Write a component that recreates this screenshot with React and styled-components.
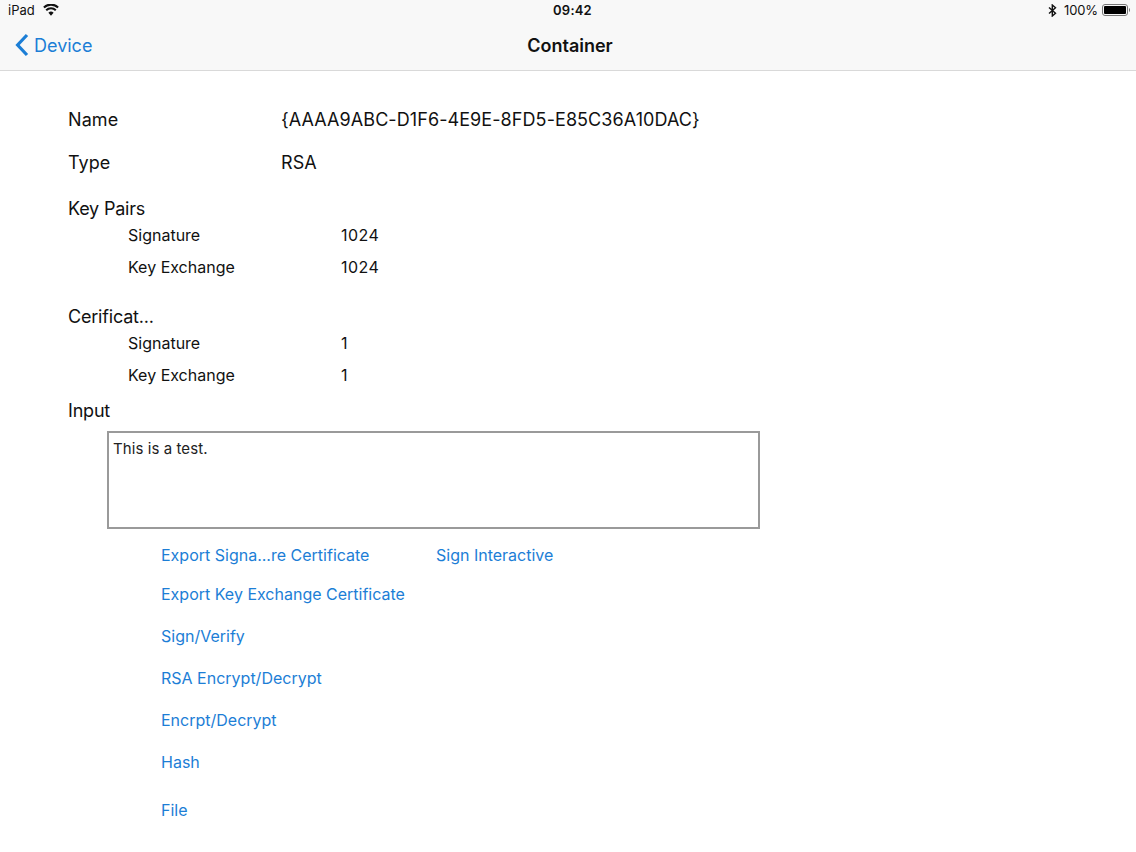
import React from 'react'
import styled, { createGlobalStyle } from 'styled-components'

const GlobalStyle = createGlobalStyle`
  html, body {
    margin: 0;
    padding: 0;
    background: #fff;
    font-family: Inter, 'Liberation Sans', sans-serif;
    color: #111;
  }
`

const Page = styled.div`
  width: 1136px;
  height: 852px;
  overflow: hidden;
  background: #fff;
`

const TopBar = styled.header`
  height: 71px;
  background: #f8f8f8;
  border-bottom: 1px solid #d9d9d9;
  box-sizing: border-box;
`

const StatusBar = styled.div`
  height: 20px;
  display: grid;
  grid-template-columns: 1fr auto 1fr;
  align-items: center;
  padding: 0 5px 0 8px;
  font-size: 13px;
  color: #111;
`

const StatusLeft = styled.div`
  display: flex;
  align-items: center;
  gap: 8px;
`

const StatusRight = styled.div`
  display: flex;
  align-items: center;
  justify-content: flex-end;
  gap: 4px;
  letter-spacing: -0.1px;
`

const BluetoothSlot = styled.span`
  display: flex;
  margin-right: 3px;
`

const Clock = styled.div`
  margin-left: 6px;
  font-weight: 600;
  letter-spacing: 0.2px;
`

const NavBar = styled.nav`
  height: 50px;
  display: grid;
  grid-template-columns: 1fr auto 1fr;
  align-items: center;
  padding: 0 15px;
`

const BackLink = styled.div`
  display: flex;
  align-items: center;
  gap: 5px;
  font-size: 18px;
  color: #1c7ed6;
`

const NavTitle = styled.h1`
  margin: 0 0 0 4px;
  font-size: 18px;
  font-weight: 600;
  color: #111;
`

const Content = styled.main`
  padding: 26px 0 0 68px;
`

const InfoRow = styled.div`
  display: flex;
  align-items: center;
  height: ${(p) => p.$h}px;
  font-size: 18px;
  letter-spacing: 0.08px;
`

const InfoLabel = styled.div`
  width: 213px;
  flex-shrink: 0;
`

const Heading = styled.div`
  height: 22px;
  line-height: 24px;
  margin-top: ${(p) => p.$top}px;
  font-size: 18px;
  letter-spacing: -0.2px;
`

const SubRow = styled.div`
  display: flex;
  align-items: center;
  height: 32px;
  padding-left: 60px;
  font-size: 16px;
`

const Count = styled.span`
  letter-spacing: 0.5px;
`

const TextBox = styled.div`
  box-sizing: border-box;
  width: 653px;
  height: 98px;
  margin: 10px 0 0 39px;
  padding: 6px 4px;
  border: 2px solid #9a9a9a;
  font-size: 15px;
  line-height: 20px;
  letter-spacing: 0.08px;
  color: #222;
`

const Actions = styled.div`
  margin-left: 93px;
  padding-top: 6px;
`

const ActionRow = styled.div`
  display: flex;
  align-items: center;
  height: ${(p) => p.$h}px;
  margin-top: ${(p) => p.$top || 0}px;
`

const ActionLink = styled.button`
  border: none;
  background: none;
  padding: 0;
  font: inherit;
  font-size: 16px;
  color: #1c7ed6;
  width: ${(p) => (p.$w ? `${p.$w}px` : 'auto')};
  text-align: left;
`

function WifiIcon() {
  return (
    <svg width="16" height="12" viewBox="0 0 16 12">
      <path d="M8 11.8 5.4 8.7a3.8 3.8 0 0 1 5.2 0Z" fill="#111" />
      <path d="M3.2 6.2a7 7 0 0 1 9.6 0" fill="none" stroke="#111" strokeWidth="2.1" />
      <path d="M.9 3.4a10.4 10.4 0 0 1 14.2 0" fill="none" stroke="#111" strokeWidth="2.1" />
    </svg>
  )
}

function BluetoothIcon() {
  return (
    <svg width="9" height="13" viewBox="0 0 9 13">
      <path d="M1 3.5 7.5 9.2 4.3 12V1l3.2 2.8L1 9.5" fill="none" stroke="#111" strokeWidth="1.4" />
    </svg>
  )
}

function BatteryIcon() {
  return (
    <svg width="29" height="12" viewBox="0 0 29 12">
      <rect x="0.5" y="0.5" width="25" height="11" rx="2.5" fill="none" stroke="#777" />
      <rect x="2" y="2" width="22" height="8" rx="1" fill="#000" />
      <path d="M27 4v4a2 2 0 0 0 1-2 2 2 0 0 0-1-2Z" fill="#777" />
    </svg>
  )
}

function BackChevron() {
  return (
    <svg width="14" height="24" viewBox="0 0 14 24">
      <path d="M12 2 2.6 12 12 22" fill="none" stroke="#1c7ed6" strokeWidth="3.2" />
    </svg>
  )
}

function KeyGroup({ title, top, signature, exchange }) {
  return (
    <>
      <Heading $top={top}>{title}</Heading>
      <SubRow>
        <InfoLabel>Signature</InfoLabel>
        <Count>{signature}</Count>
      </SubRow>
      <SubRow>
        <InfoLabel>Key Exchange</InfoLabel>
        <Count>{exchange}</Count>
      </SubRow>
    </>
  )
}

export default function App() {
  return (
    <Page>
      <GlobalStyle />
      <TopBar>
        <StatusBar>
          <StatusLeft>
            iPad
            <WifiIcon />
          </StatusLeft>
          <Clock>09:42</Clock>
          <StatusRight>
            <BluetoothSlot>
              <BluetoothIcon />
            </BluetoothSlot>
            100%
            <BatteryIcon />
          </StatusRight>
        </StatusBar>
        <NavBar>
          <BackLink>
            <BackChevron />
            Device
          </BackLink>
          <NavTitle>Container</NavTitle>
        </NavBar>
      </TopBar>
      <Content>
        <InfoRow $h={44}>
          <InfoLabel>Name</InfoLabel>
          {'{AAAA9ABC-D1F6-4E9E-8FD5-E85C36A10DAC}'}
        </InfoRow>
        <InfoRow $h={43}>
          <InfoLabel>Type</InfoLabel>
          RSA
        </InfoRow>
        <KeyGroup title="Key Pairs" top={13} signature="1024" exchange="1024" />
        <KeyGroup title="Cerificat..." top={22} signature="1" exchange="1" />
        <Heading $top={8}>Input</Heading>
        <TextBox>This is a test.</TextBox>
        <Actions>
          <ActionRow $h={40}>
            <ActionLink $w={275}>Export Signa...re Certificate</ActionLink>
            <ActionLink>Sign Interactive</ActionLink>
          </ActionRow>
          <ActionRow $h={38}>
            <ActionLink>Export Key Exchange Certificate</ActionLink>
          </ActionRow>
          <ActionRow $h={42} $top={2}>
            <ActionLink>Sign/Verify</ActionLink>
          </ActionRow>
          <ActionRow $h={42}>
            <ActionLink>RSA Encrypt/Decrypt</ActionLink>
          </ActionRow>
          <ActionRow $h={42}>
            <ActionLink>Encrpt/Decrypt</ActionLink>
          </ActionRow>
          <ActionRow $h={42}>
            <ActionLink>Hash</ActionLink>
          </ActionRow>
          <ActionRow $h={54}>
            <ActionLink>File</ActionLink>
          </ActionRow>
        </Actions>
      </Content>
    </Page>
  )
}
